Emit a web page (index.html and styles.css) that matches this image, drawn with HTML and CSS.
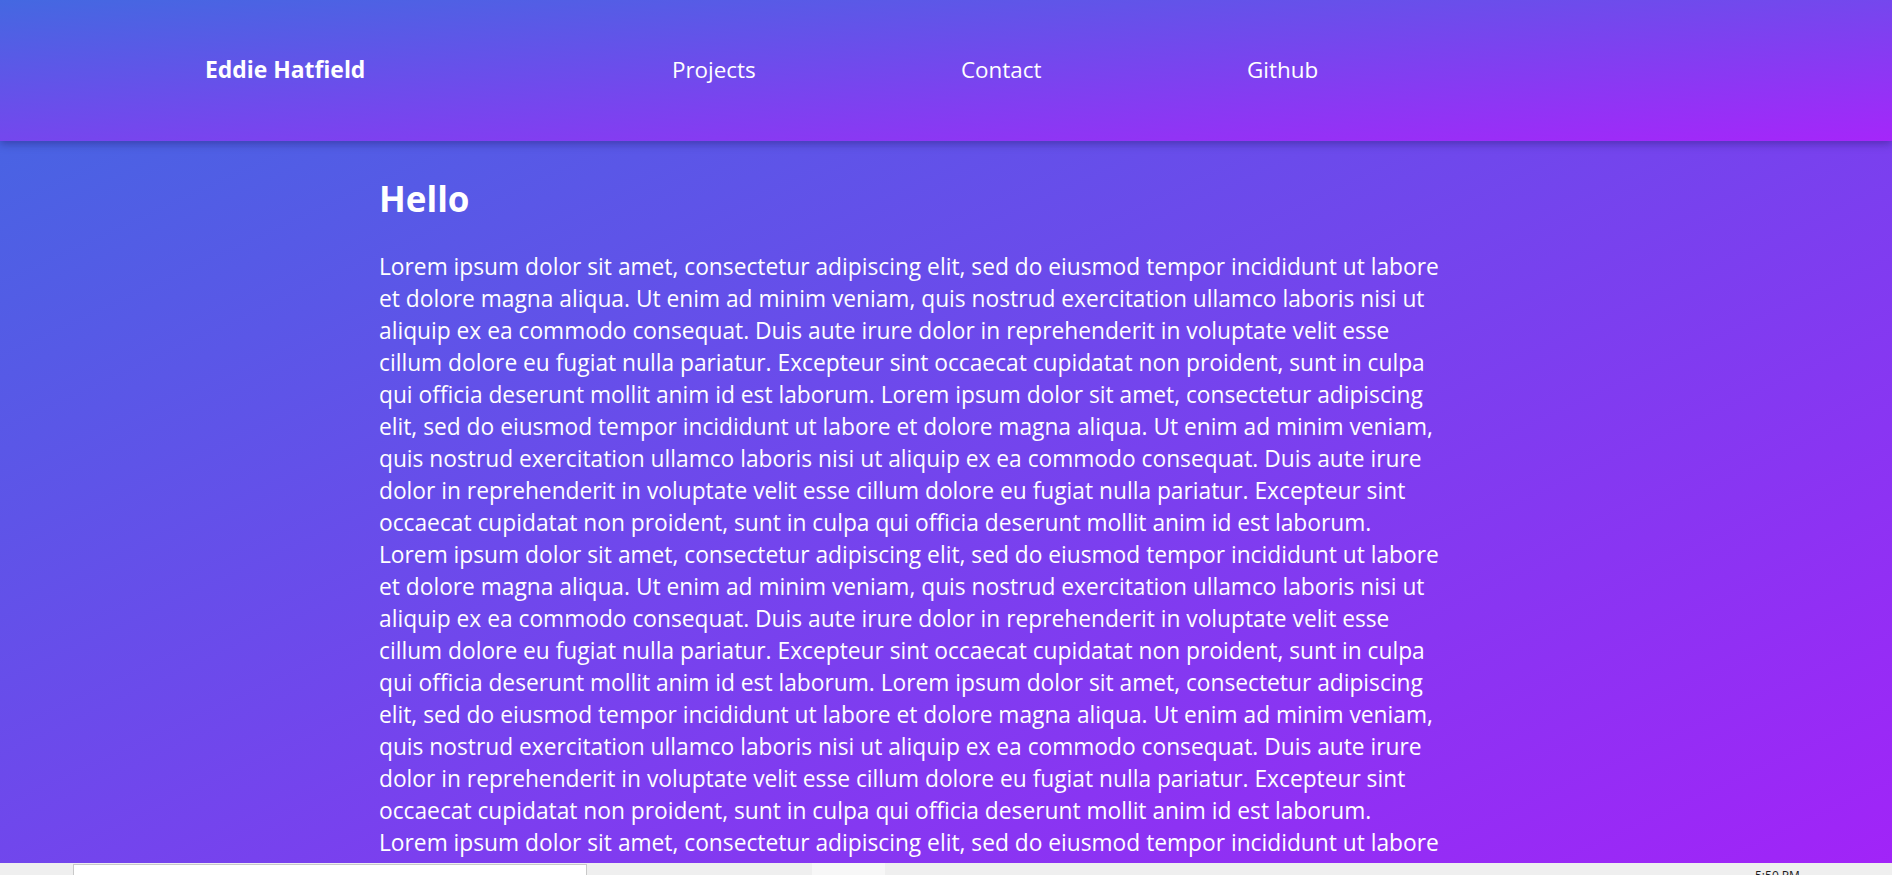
FILE: index.html
```html
<!DOCTYPE html>
<html lang="en">
<head>
<meta charset="utf-8">
<title>Eddie Hatfield</title>
<link rel="stylesheet" href="styles.css">
</head>
<body>
<header class="site-header">
  <nav class="nav">
    <a class="brand" href="#">Eddie Hatfield</a>
    <a class="nav-link" href="#">Projects</a>
    <a class="nav-link" href="#">Contact</a>
    <a class="nav-link" href="#">Github</a>
  </nav>
</header>
<main class="content">
  <h1 class="title">Hello</h1>
  <p class="body-text">Lorem ipsum dolor sit amet, consectetur adipiscing elit, sed do eiusmod tempor incididunt ut labore<br>et dolore magna aliqua. Ut enim ad minim veniam, quis nostrud exercitation ullamco laboris nisi ut<br>aliquip ex ea commodo consequat. Duis aute irure dolor in reprehenderit in voluptate velit esse<br>cillum dolore eu fugiat nulla pariatur. Excepteur sint occaecat cupidatat non proident, sunt in culpa<br>qui officia deserunt mollit anim id est laborum. Lorem ipsum dolor sit amet, consectetur adipiscing<br>elit, sed do eiusmod tempor incididunt ut labore et dolore magna aliqua. Ut enim ad minim veniam,<br>quis nostrud exercitation ullamco laboris nisi ut aliquip ex ea commodo consequat. Duis aute irure<br>dolor in reprehenderit in voluptate velit esse cillum dolore eu fugiat nulla pariatur. Excepteur sint<br>occaecat cupidatat non proident, sunt in culpa qui officia deserunt mollit anim id est laborum.<br>Lorem ipsum dolor sit amet, consectetur adipiscing elit, sed do eiusmod tempor incididunt ut labore<br>et dolore magna aliqua. Ut enim ad minim veniam, quis nostrud exercitation ullamco laboris nisi ut<br>aliquip ex ea commodo consequat. Duis aute irure dolor in reprehenderit in voluptate velit esse<br>cillum dolore eu fugiat nulla pariatur. Excepteur sint occaecat cupidatat non proident, sunt in culpa<br>qui officia deserunt mollit anim id est laborum. Lorem ipsum dolor sit amet, consectetur adipiscing<br>elit, sed do eiusmod tempor incididunt ut labore et dolore magna aliqua. Ut enim ad minim veniam,<br>quis nostrud exercitation ullamco laboris nisi ut aliquip ex ea commodo consequat. Duis aute irure<br>dolor in reprehenderit in voluptate velit esse cillum dolore eu fugiat nulla pariatur. Excepteur sint<br>occaecat cupidatat non proident, sunt in culpa qui officia deserunt mollit anim id est laborum.<br>Lorem ipsum dolor sit amet, consectetur adipiscing elit, sed do eiusmod tempor incididunt ut labore</p>
</main>
<div class="taskbar">
  <div class="task-search"></div>
  <div class="task-item"></div>
  <span class="task-clock">5:50 PM</span>
</div>
</body>
</html>
```

FILE: styles.css
```css
html, body {
  margin: 0;
  padding: 0;
}

body {
  font-family: "Open Sans", "Noto Sans", sans-serif;
  color: #ffffff;
  background: linear-gradient(to bottom right, #4169e1, #a223f8) fixed;
  min-height: 100vh;
}

.site-header {
  position: relative;
  z-index: 1;
  height: 141px;
  background: linear-gradient(to bottom right, #4468e1, #a526fa);
  box-shadow: 0 3px 8px rgba(20, 10, 80, 0.35);
}

.nav {
  height: 100%;
  display: grid;
  grid-template-columns: 467px 289px 286px auto;
  align-items: center;
  padding-left: 205px;
  padding-bottom: 2px;
  box-sizing: border-box;
}

.brand,
.nav-link {
  color: #ffffff;
  text-decoration: none;
  font-size: 22.4px;
  justify-self: start;
}

.brand {
  font-weight: 700;
  font-size: 22.9px;
}

.content {
  margin-left: 379px;
}

.title {
  margin: 34px 0 0;
  font-size: 35px;
  font-weight: 700;
  line-height: 48px;
}

.body-text {
  margin: 28px 0 0;
  font-size: 22.75px;
  line-height: 32px;
  white-space: nowrap;
}

.taskbar {
  position: fixed;
  left: 0;
  right: 0;
  bottom: 0;
  height: 12px;
  overflow: hidden;
  background: #efefef;
  display: flex;
  align-items: flex-start;
}

.task-search {
  margin-left: 73px;
  margin-top: 1px;
  width: 512px;
  height: 30px;
  background: #ffffff;
  border: 1px solid #c9c9c9;
  flex: none;
}

.task-item {
  margin-left: 225px;
  width: 73px;
  height: 12px;
  background: #f7f7f7;
  flex: none;
}

.task-clock {
  margin-left: 870px;
  margin-top: 5px;
  font-family: "Open Sans", sans-serif;
  font-size: 12px;
  line-height: 16px;
  color: #1a1a1a;
  white-space: nowrap;
}
```
